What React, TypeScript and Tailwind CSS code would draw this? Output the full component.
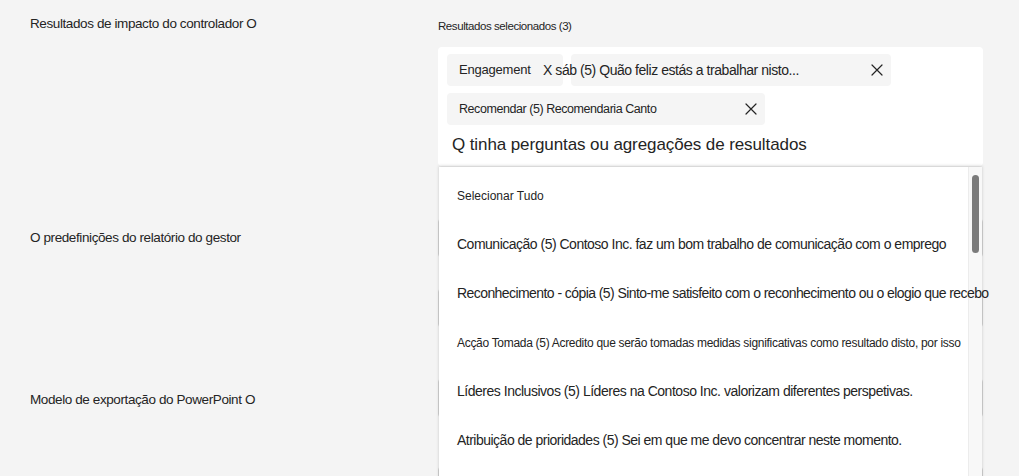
import React from "react";

const font = { fontFamily: '"Liberation Sans", Arial, sans-serif' };

function XIcon() {
  return (
    <svg width="12" height="12" viewBox="0 0 12 12" className="shrink-0">
      <path d="M1 1 L11 11 M11 1 L1 11" stroke="#242424" strokeWidth="1.2" strokeLinecap="round" />
    </svg>
  );
}

const items = [
  { t: "Selecionar Tudo", cls: "text-[12px]" },
  { t: "Comunicação (5) Contoso Inc. faz um bom trabalho de comunicação com o emprego", cls: "text-[14px] tracking-[-0.5px]" },
  { t: "Reconhecimento - cópia (5) Sinto-me satisfeito com o reconhecimento ou o elogio que recebo", cls: "text-[14px] tracking-[-0.57px]" },
  { t: "Acção Tomada (5) Acredito que serão tomadas medidas significativas como resultado disto, por isso", cls: "text-[12px] tracking-[-0.3px]" },
  { t: "Líderes Inclusivos (5) Líderes na Contoso Inc. valorizam diferentes perspetivas.", cls: "text-[14px] tracking-[-0.48px]" },
  { t: "Atribuição de prioridades (5) Sei em que me devo concentrar neste momento.", cls: "text-[14px] tracking-[-0.51px]" },
];

export default function App() {
  return (
    <div className="w-[1019px] h-[476px] overflow-hidden bg-[#f4f4f4] text-[#242424]" style={font}>
      <div className="grid grid-cols-[408px_545px] pl-[30px]">
        {/* Row 1 */}
        <div className="pt-[14px] text-[13.5px] leading-[20px] tracking-[-0.4px]">
          Resultados de impacto do controlador O
        </div>
        <div className="relative">
          <div className="pt-[18px] text-[11.5px] leading-[16px] tracking-[-0.43px]">Resultados selecionados (3)</div>
          <div className="mt-[13px] bg-white rounded-[4px] pl-[9px] pt-[7px] h-[119px]">
            <div className="flex gap-[8px]">
              <div className="w-[116px] h-[32px] bg-[#f5f5f5] rounded-[4px] flex items-center pl-[12px] text-[13px] tracking-[-0.2px]">
                Engagement
              </div>
              <div className="w-[320px] h-[32px] bg-[#f5f5f5] rounded-[4px] flex items-center pr-[8px] text-[14px] tracking-[-0.45px]">
                <span className="-ml-[28px] whitespace-nowrap">X sáb (5) Quão feliz estás a trabalhar nisto...</span>
                <span className="ml-auto"><XIcon /></span>
              </div>
            </div>
            <div className="mt-[7px] w-[318px] h-[32px] bg-[#f5f5f5] rounded-[4px] flex items-center pl-[12px] pr-[8px] text-[12.5px] tracking-[-0.44px]">
              <span className="whitespace-nowrap">Recomendar (5) Recomendaria Canto</span>
              <span className="ml-auto"><XIcon /></span>
            </div>
            <div className="mt-[9px] pl-[5px] text-[17px] leading-[22px] tracking-[-0.1px]">
              Q tinha perguntas ou agregações de resultados
            </div>
          </div>

          {/* Dropdown overlay */}
          <div className="absolute left-[1px] right-[1px] top-[167px] h-[330px] bg-white shadow-[0_-1px_3px_rgba(0,0,0,0.18)] z-10 flex">
            <div className="relative z-10 flex-1 min-w-0 pt-[4px] pl-[18px] whitespace-nowrap">
              {items.map((it) => (
                <div key={it.t} className={`h-[49px] flex items-center ${it.cls}`}>
                  {it.t}
                </div>
              ))}
            </div>
            <div className="w-[14px] shrink-0 bg-[#f8f8f8] border-l border-[#ececec] pt-[8px] flex justify-center">
              <div className="w-[7px] h-[78px] rounded-full bg-[#7b7b7b]" />
            </div>
          </div>
        </div>

        {/* Row 2 */}
        <div className="mt-[52px] h-[40px] flex items-center text-[13.5px] tracking-[-0.4px]">
          O predefinições do relatório do gestor
        </div>
        <div className="mt-[52px] flex flex-col gap-[30px]">
          <div className="h-[40px] bg-white border border-[#d1d1d1] rounded-[4px]" />
          <div className="h-[40px] bg-white border border-[#d1d1d1] rounded-[4px]" />
        </div>

        {/* Row 3 */}
        <div className="mt-[50px] h-[40px] flex items-center pt-[4px] text-[13.5px] tracking-[-0.4px]">
          Modelo de exportação do PowerPoint O
        </div>
        <div className="mt-[50px]">
          <div className="h-[40px] bg-white border border-[#d1d1d1] rounded-[4px]" />
        </div>

        {/* Row 4 */}
        <div className="mt-[48px]" />
        <div className="mt-[48px]">
          <div className="h-[40px] bg-white border border-[#d1d1d1] rounded-[4px]" />
        </div>
      </div>
    </div>
  );
}
